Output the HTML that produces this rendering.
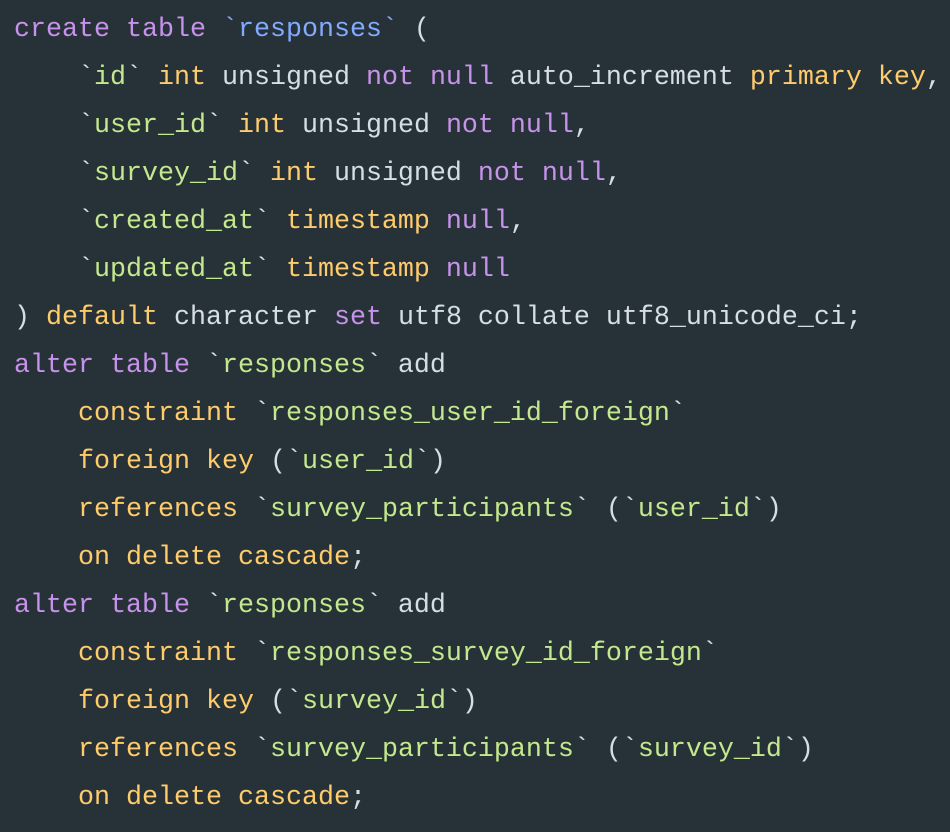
<!DOCTYPE html>
<html><head><meta charset="utf-8"><style>
html,body{margin:0;padding:0;background:#263238;width:950px;height:832px;overflow:hidden}
pre{margin:0;padding:6px 0 0 14px;font-family:"Liberation Mono",monospace;font-size:26.67px;line-height:48px;color:#d6dee5}
.k{color:#c792ea}.y{color:#ffcb6b}.g{color:#c3e88d}.b{color:#82aaff}
</style></head><body><pre><span class="k">create table</span> <span class="b">`responses`</span> (
    `<span class="g">id</span>` <span class="y">int</span> unsigned <span class="k">not null</span> auto_increment <span class="y">primary key</span>,
    `<span class="g">user_id</span>` <span class="y">int</span> unsigned <span class="k">not null</span>,
    `<span class="g">survey_id</span>` <span class="y">int</span> unsigned <span class="k">not null</span>,
    `<span class="g">created_at</span>` <span class="y">timestamp</span> <span class="k">null</span>,
    `<span class="g">updated_at</span>` <span class="y">timestamp</span> <span class="k">null</span>
) <span class="y">default</span> character <span class="k">set</span> utf8 collate utf8_unicode_ci;
<span class="k">alter table</span> `<span class="g">responses</span>` add
    <span class="y">constraint</span> `<span class="g">responses_user_id_foreign</span>`
    <span class="y">foreign key</span> (`<span class="g">user_id</span>`)
    <span class="y">references</span> `<span class="g">survey_participants</span>` (`<span class="g">user_id</span>`)
    <span class="y">on delete cascade</span>;
<span class="k">alter table</span> `<span class="g">responses</span>` add
    <span class="y">constraint</span> `<span class="g">responses_survey_id_foreign</span>`
    <span class="y">foreign key</span> (`<span class="g">survey_id</span>`)
    <span class="y">references</span> `<span class="g">survey_participants</span>` (`<span class="g">survey_id</span>`)
    <span class="y">on delete cascade</span>;
</pre></body></html>
